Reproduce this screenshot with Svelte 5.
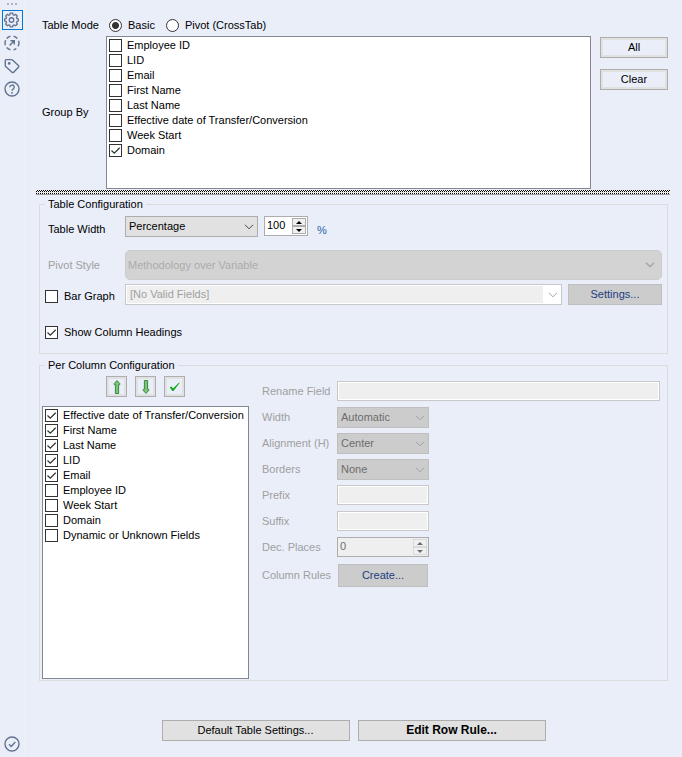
<script>
  let mode = $state('basic');
  let tableWidth = $state(100);
  let decPlaces = $state(0);
  let barGraph = $state(false);
  let showHeadings = $state(true);

  let groupFields = $state([
    { name: 'Employee ID', checked: false },
    { name: 'LID', checked: false },
    { name: 'Email', checked: false },
    { name: 'First Name', checked: false },
    { name: 'Last Name', checked: false },
    { name: 'Effective date of Transfer/Conversion', checked: false },
    { name: 'Week Start', checked: false },
    { name: 'Domain', checked: true }
  ]);

  let columns = $state([
    { name: 'Effective date of Transfer/Conversion', checked: true },
    { name: 'First Name', checked: true },
    { name: 'Last Name', checked: true },
    { name: 'LID', checked: true },
    { name: 'Email', checked: true },
    { name: 'Employee ID', checked: false },
    { name: 'Week Start', checked: false },
    { name: 'Domain', checked: false },
    { name: 'Dynamic or Unknown Fields', checked: false }
  ]);

  function setAll(value) {
    groupFields.forEach((f) => (f.checked = value));
  }
</script>

{#snippet checklist(items)}
  {#each items as item}
    <label class="check">
      <input type="checkbox" bind:checked={item.checked} />
      <span>{item.name}</span>
    </label>
  {/each}
{/snippet}

{#snippet dropdown(id, value, disabled, kind)}
  <div class="dropdown {kind}">
    <select {id} {disabled}>
      <option>{value}</option>
    </select>
    <svg class="chevron" viewBox="0 0 10 6" width="10" height="6"><path d="M1 .8 5 4.8 9 .8" /></svg>
  </div>
{/snippet}

<div class="app">
  <nav class="sidebar">
    <div class="grip"><i></i><i></i><i></i></div>
    <button class="tool active" aria-label="Configuration">
      <svg viewBox="0 0 16 17" width="15" height="16">
        <path d="M6.7 1.2h2.6l.4 1.7 1.2.5 1.5-.9 1.8 1.8-.9 1.5.5 1.2 1.5.4v2.2l-1.5.5-.5 1.2.9 1.5-1.8 1.8-1.5-.9-1.2.5-.4 1.6H6.7l-.4-1.6-1.2-.5-1.5.9-1.8-1.8.9-1.5-.5-1.2-1.5-.5V7.4l1.5-.4.5-1.2-.9-1.5 1.8-1.8 1.5.9 1.2-.5z" />
        <circle cx="8" cy="8.5" r="2.4" />
      </svg>
    </button>
    <button class="tool" aria-label="Open">
      <svg viewBox="0 0 16 16" width="16" height="16">
        <path d="M2.7 3.5A7 7 0 0 1 6.4 1.2M9.6 1.2a7 7 0 0 1 3.7 2.3M14.6 5.8a7 7 0 0 1-.6 5.6M12.3 13.5a7 7 0 0 1-2.7 1.3M6.4 14.8a7 7 0 0 1-3.7-2.3M1.4 10.2a7 7 0 0 1 .2-5" />
        <path d="M5.6 10.4 10 6M6.4 5.7h3.9v3.9" />
      </svg>
    </button>
    <button class="tool" aria-label="Annotation">
      <svg viewBox="0 0 16 16" width="16" height="16">
        <path d="M1.3 2.6a1 1 0 0 1 1-1h5.2a1.4 1.4 0 0 1 1 .4l5.9 5.6a1.2 1.2 0 0 1 0 1.7l-4.7 4.9a1.2 1.2 0 0 1-1.7 0L1.7 8.6a1.4 1.4 0 0 1-.4-1z" />
        <circle class="solid" cx="5.2" cy="5.4" r="1.3" />
      </svg>
    </button>
    <button class="tool" aria-label="Help">
      <svg viewBox="0 0 16 16" width="16" height="16">
        <circle cx="8" cy="8" r="7" />
        <path d="M5.8 6.3a2.2 2.2 0 1 1 3.3 1.9C8.3 8.7 8 9 8 9.8" />
        <circle class="solid" cx="8" cy="11.9" r=".9" />
      </svg>
    </button>
    <button class="tool bottom" aria-label="Status">
      <svg viewBox="0 0 16 16" width="16" height="16">
        <circle cx="8" cy="8" r="7" />
        <path d="M5 8.3 7.2 10.5 11.3 6" />
      </svg>
    </button>
  </nav>

  <main>
    <div class="mode" role="radiogroup" aria-label="Table Mode">
      <span class="side-label">Table Mode</span>
      <label class="radio"><input type="radio" value="basic" bind:group={mode} />Basic</label>
      <label class="radio"><input type="radio" value="pivot" bind:group={mode} />Pivot (CrossTab)</label>
    </div>

    <div class="group-by">
      <span class="side-label">Group By</span>
      <div class="listbox" role="group" aria-label="Group By">{@render checklist(groupFields)}</div>
      <div class="stack">
        <button class="btn framed" onclick={() => setAll(true)}>All</button>
        <button class="btn framed" onclick={() => setAll(false)}>Clear</button>
      </div>
    </div>

    <div class="splitter"></div>

    <fieldset class="table-config">
      <legend>Table Configuration</legend>
      <div class="config-grid">
        <label class="low" for="width-type">Table Width</label>
        <div class="line">
          {@render dropdown('width-type', 'Percentage', false, 'normal')}
          <div class="spinner narrow">
            <input type="text" aria-label="Width value" bind:value={tableWidth} />
            <div class="arrows">
              <button aria-label="Increase" onclick={() => tableWidth++}><svg viewBox="0 0 6 3" width="6" height="3"><path d="M0 3 3 0 6 3z" /></svg></button>
              <button aria-label="Decrease" onclick={() => tableWidth--}><svg viewBox="0 0 6 3" width="6" height="3"><path d="M0 0 3 3 6 0z" /></svg></button>
            </div>
          </div>
          <span class="unit">%</span>
        </div>

        <label class="muted" for="pivot-style">Pivot Style</label>
        {@render dropdown('pivot-style', 'Methodology over Variable', true, 'tall')}

        <label class="check"><input type="checkbox" bind:checked={barGraph} /><span>Bar Graph</span></label>
        <div class="line">
          {@render dropdown('bar-field', '[No Valid Fields]', true, 'combo')}
          <button class="btn settings" disabled>Settings...</button>
        </div>
      </div>
      <label class="check headings"><input type="checkbox" bind:checked={showHeadings} /><span>Show Column Headings</span></label>
    </fieldset>

    <fieldset class="column-config">
      <legend>Per Column Configuration</legend>
      <div class="columns">
        <div class="left">
          <div class="toolbar">
            <button class="btn framed" aria-label="Move up">
              <svg viewBox="0 0 8 14" width="8" height="14">
                <path class="arrow" d="M4 .6 6.8 3.6v1H5.6v8.9H2.4V4.6H1.2v-1z" />
              </svg>
            </button>
            <button class="btn framed" aria-label="Move down">
              <svg viewBox="0 0 8 14" width="8" height="14">
                <path class="arrow" d="M4 13.4 6.8 10.4v-1H5.6V.5H2.4v8.9H1.2v1z" />
              </svg>
            </button>
            <button class="btn framed" aria-label="Toggle all">
              <svg viewBox="0 0 11 10" width="11" height="10">
                <path class="tick" d="M.8 5.2 2.3 4.4 4 6.4 10.2.6 10.6 1 4.4 9 3.4 9z" />
              </svg>
            </button>
          </div>
          <div class="listbox" role="group" aria-label="Columns">{@render checklist(columns)}</div>
        </div>

        <div class="details">
          <label for="rename">Rename Field</label>
          <input id="rename" class="text wide" type="text" disabled />
          <label for="col-width">Width</label>
          {@render dropdown('col-width', 'Automatic', true, 'small')}
          <label for="align">Alignment (H)</label>
          {@render dropdown('align', 'Center', true, 'small')}
          <label for="borders">Borders</label>
          {@render dropdown('borders', 'None', true, 'small')}
          <label for="prefix">Prefix</label>
          <input id="prefix" class="text" type="text" disabled />
          <label for="suffix">Suffix</label>
          <input id="suffix" class="text" type="text" disabled />
          <label for="decimals">Dec. Places</label>
          <div class="spinner off">
            <input id="decimals" type="text" bind:value={decPlaces} disabled />
            <div class="arrows">
              <button aria-label="Increase" disabled><svg viewBox="0 0 6 3" width="6" height="3"><path d="M0 3 3 0 6 3z" /></svg></button>
              <button aria-label="Decrease" disabled><svg viewBox="0 0 6 3" width="6" height="3"><path d="M0 0 3 3 6 0z" /></svg></button>
            </div>
          </div>
          <label class="rules-label" for="rules">Column Rules</label>
          <button id="rules" class="btn create" disabled>Create...</button>
        </div>
      </div>
    </fieldset>

    <footer>
      <button class="btn">Default Table Settings...</button>
      <button class="btn strong">Edit Row Rule...</button>
    </footer>
  </main>
</div>

<style>
  :global(body) {
    background: #e9eef9;
  }

  .app {
    display: flex;
    min-height: 100vh;
    font-family: 'Liberation Sans', Arial, sans-serif;
    font-size: 11px;
    line-height: 15px;
    color: #000;
    background: #e9eef9;
  }

  .app * {
    box-sizing: border-box;
  }

  button,
  input,
  select {
    font: inherit;
    color: inherit;
    margin: 0;
  }

  /* sidebar */
  .sidebar {
    display: flex;
    flex-direction: column;
    gap: 3px;
    width: 25px;
    flex: none;
    padding: 0 2px 3px;
    border-right: 1px solid #f0f1f6;
  }

  .grip {
    display: flex;
    justify-content: center;
    gap: 2px;
    height: 7px;
    padding-top: 3px;
  }

  .grip i {
    width: 2px;
    height: 2px;
    background: #b4b4b8;
  }

  .tool {
    display: flex;
    align-items: center;
    width: 21px;
    height: 20px;
    padding: 0 1px;
    border: 1px solid transparent;
    background: none;
  }

  .tool.active {
    border-color: #0078d7;
  }

  .tool.bottom {
    margin-top: auto;
  }

  .tool svg {
    fill: none;
    stroke: #61738f;
    stroke-width: 1.4;
  }

  .tool .solid {
    fill: #61738f;
    stroke: none;
  }

  /* content */
  main {
    flex: 1;
    min-width: 0;
    display: flex;
    flex-direction: column;
    padding: 15px 14px;
  }

  .mode {
    display: flex;
    align-items: center;
    height: 21px;
  }

  .side-label {
    width: 67px;
    flex: none;
    padding-left: 3px;
  }

  .radio {
    display: flex;
    align-items: center;
    gap: 6px;
    margin-left: 3px;
    margin-right: 8px;
  }

  .radio input {
    appearance: none;
    width: 13px;
    height: 13px;
    border: 1px solid #333;
    border-radius: 50%;
    background: #fff;
  }

  .radio input:checked {
    background: radial-gradient(circle, #333 3px, #fff 4px);
  }

  .group-by {
    display: flex;
    align-items: center;
  }

  .group-by .listbox {
    flex: 1;
    min-height: 153px;
  }

  .stack {
    display: flex;
    flex-direction: column;
    gap: 11px;
    align-self: stretch;
    width: 68px;
    margin: 1px 0 0 9px;
  }

  .listbox {
    padding: 1px 2px;
    border: 1px solid #828790;
    background: #fff;
  }

  .check {
    display: flex;
    align-items: center;
    gap: 5px;
    height: 15px;
  }

  .check input {
    appearance: none;
    flex: none;
    width: 13px;
    height: 13px;
    border: 1px solid #333;
    background: #fff;
  }

  .check input:checked {
    background: #fff url("data:image/svg+xml,%3Csvg xmlns='http://www.w3.org/2000/svg' viewBox='0 0 11 11'%3E%3Cpath d='M1.5 5.5 4.3 8.2 9.7 2.8' fill='none' stroke='%23333' stroke-width='1.3'/%3E%3C/svg%3E");
  }

  /* two dotted lines with a pale gap between them */
  .splitter {
    height: 5px;
    margin: 1px -2px 2px -3px;
    border-bottom: 1px solid #a0a0a0;
    background:
      linear-gradient(#e4e4e4, #e4e4e4) 0 2px / 100% 1px no-repeat,
      repeating-conic-gradient(#000 0 25%, #fff 0 50%) 0 0 / 2px 2px;
  }

  fieldset {
    min-width: 0;
    margin: 0;
    padding: 0;
    border: 1px solid #dcdcdc;
  }

  legend {
    padding: 0 3px;
    line-height: 14px;
  }

  .table-config {
    padding: 5px 5px 13px;
  }

  .config-grid {
    display: grid;
    grid-template-columns: 80px 1fr;
    align-items: center;
  }

  .config-grid > label:not(.check) {
    padding-left: 3px;
  }

  .config-grid > .low {
    padding-top: 6px;
  }

  .config-grid > .muted {
    padding-top: 10px;
  }

  .config-grid > .check {
    margin-top: 4px;
  }

  .muted,
  .details label {
    color: #a0a0a0;
  }

  .line {
    display: flex;
    gap: 6px;
  }

  .headings {
    margin-top: 20px;
  }

  .headings,
  .config-grid > .check {
    gap: 6px;
  }

  .unit {
    padding: 7px 0 0 3px;
    line-height: 14px;
    color: #1f5fa8;
  }

  /* drop-downs */
  .dropdown {
    position: relative;
    display: grid;
  }

  .dropdown select {
    appearance: none;
    width: 100%;
    height: 21px;
    padding: 0 3px;
    border: 1px solid #adadad;
    border-radius: 0;
    background: #e1e1e1;
    opacity: 1;
  }

  .chevron {
    position: absolute;
    top: 50%;
    right: 4px;
    margin-top: -3px;
    fill: none;
    stroke: #444;
    pointer-events: none;
  }

  .dropdown.normal {
    width: 133px;
  }

  .dropdown.tall {
    margin: 13px 0 4px;
  }

  .dropdown.tall select {
    height: 30px;
    padding: 0 2px;
    border-color: #cccccc;
    border-radius: 5px;
    background: #d3d3d3;
    color: #acacac;
  }

  .dropdown.tall .chevron {
    right: 7px;
    stroke: #a6a6a6;
    stroke-width: 1.5;
  }

  .dropdown.combo {
    flex: 1;
  }

  .dropdown.combo select {
    padding: 0 4px;
    border-color: #c8c8c8;
    background: linear-gradient(to left, #fff 18px, #efefef 18px);
    box-shadow: inset 0 0 0 1px #fff;
    color: #a0a0a0;
  }

  .dropdown.combo .chevron,
  .dropdown.small .chevron {
    stroke: #a0a0a0;
  }

  .dropdown.small select {
    border-color: #bfbfbf;
    background: #cccccc;
    color: #6d6d6d;
  }

  .spinner {
    display: flex;
    height: 20px;
    padding: 1px;
    border: 1px solid #adadad;
    background: #fff;
  }

  .spinner.narrow {
    width: 44px;
  }

  .spinner input {
    flex: 1;
    min-width: 0;
    height: 15px;
    padding: 0 0 0 1px;
    border: 0;
    background: none;
  }

  .arrows {
    display: flex;
    flex-direction: column;
    width: 14px;
  }

  .arrows button {
    flex: 1;
    display: grid;
    place-items: center;
    padding: 0;
    border: 1px solid #adadad;
    background: #f0f0f0;
  }

  .spinner.off {
    background: #efefef;
    color: #6d6d6d;
  }

  .off .arrows button {
    border-color: #d9d9d9;
  }

  .off svg {
    fill: #6d6d6d;
  }

  /* buttons */
  .btn {
    height: 21px;
    padding: 0;
    border: 1px solid #adadad;
    background: #e1e1e1;
    text-align: center;
  }

  .btn.framed {
    background: #e9eef9;
    box-shadow: inset 0 0 0 2px #e1e1e1;
  }

  .btn:disabled {
    border-color: #bfbfbf;
    background: #cccccc;
    color: #1e3c82;
  }

  .btn.settings {
    width: 94px;
  }

  /* per column */
  .column-config {
    margin-top: 4px;
    padding: 4px 7px 1px 2px;
  }

  .column-config legend {
    margin-left: 3px;
  }

  .columns {
    display: flex;
    gap: 13px;
  }

  .left {
    width: 207px;
    flex: none;
  }

  .left .listbox {
    min-height: 273px;
  }

  .toolbar {
    display: flex;
    gap: 8px;
    margin: 0 0 9px 64px;
  }

  .toolbar .btn {
    display: grid;
    place-items: center;
    width: 21px;
  }

  .arrow {
    fill: #7cc47a;
    stroke: #3c8a3e;
  }

  .tick {
    fill: #0aa50a;
  }

  .details {
    flex: 1;
    display: grid;
    grid-template-columns: 75px 92px 1fr;
    grid-auto-rows: 21px;
    row-gap: 5px;
    align-content: start;
    align-items: center;
    padding-top: 5px;
  }

  .details label {
    grid-column: 1;
  }

  .text {
    height: 20px;
    padding: 0 3px;
    border: 1px solid #c8c8c8;
    background: #efefef;
    box-shadow: inset 0 0 0 1px #fff;
  }

  .text.wide {
    grid-column: 2 / 4;
  }

  .text,
  .spinner.off {
    align-self: start;
  }

  .details .create {
    height: 23px;
    margin: 3px 1px 0;
  }

  .rules-label {
    padding-top: 3px;
  }

  footer {
    display: flex;
    justify-content: center;
    gap: 8px;
    margin-top: 39px;
  }

  footer .btn {
    width: 188px;
  }

  .strong {
    font-size: 12px;
    font-weight: bold;
  }
</style>
